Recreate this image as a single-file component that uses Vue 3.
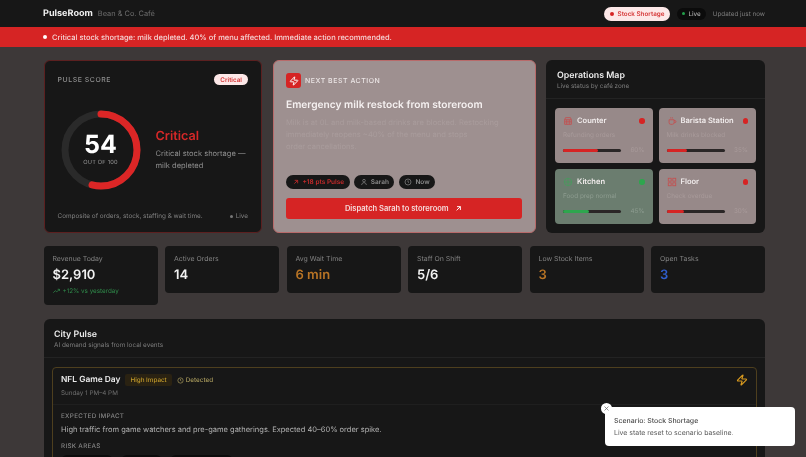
<template>
  <div class="page">
    <header class="topbar">
      <div class="brand">
        <strong>PulseRoom</strong>
        <span>Bean &amp; Co. Café</span>
      </div>
      <div class="topbar-right">
        <span class="scenario"><i></i>Stock Shortage</span>
        <span class="live"><i></i>Live</span>
        <span class="updated">Updated just now</span>
      </div>
    </header>

    <div class="banner"><i></i>Critical stock shortage: milk depleted. 40% of menu affected. Immediate action recommended.</div>

    <main class="content">
      <section class="top-grid">
        <div class="card score">
          <div class="score-head">
            <span class="eyebrow">PULSE SCORE</span>
            <span class="badge">Critical</span>
          </div>
          <div class="score-body">
            <div class="gauge">
              <svg width="80" height="80" viewBox="0 0 80 80">
                <circle cx="40" cy="40" r="36" fill="none" stroke="#2a2a2a" stroke-width="7" />
                <circle
                  cx="40"
                  cy="40"
                  r="36"
                  fill="none"
                  stroke="#dc2626"
                  stroke-width="7"
                  stroke-linecap="round"
                  stroke-dasharray="122 226"
                  transform="rotate(-90 40 40)"
                />
              </svg>
              <div class="gauge-label">
                <b>54</b>
                <small>OUT OF 100</small>
              </div>
            </div>
            <div class="score-text">
              <h2>Critical</h2>
              <p>Critical stock shortage — milk depleted</p>
            </div>
          </div>
          <div class="score-foot">
            <span>Composite of orders, stock, staffing &amp; wait time.</span>
            <span class="foot-live"><i></i>Live</span>
          </div>
        </div>

        <div class="card action">
          <div class="action-head">
            <span class="bolt-box">
              <svg width="10" height="10" viewBox="0 0 24 24" fill="none" stroke="#fff" stroke-width="2.4" stroke-linecap="round" stroke-linejoin="round">
                <path :d="zapPath" />
              </svg>
            </span>
            <span class="action-label">NEXT BEST ACTION</span>
          </div>
          <h2>Emergency milk restock from storeroom</h2>
          <p>Milk is at 0L and milk-based drinks are blocked. Restocking<br />immediately reopens ~40% of the menu and stops<br />order cancellations.</p>
          <div class="chips">
            <span class="chip red">
              <svg width="8" height="8" viewBox="0 0 24 24" fill="none" stroke="currentColor" stroke-width="2.5"><path d="M7 17L17 7M8 7h9v9" /></svg>
              +18 pts Pulse
            </span>
            <span class="chip">
              <svg width="8" height="8" viewBox="0 0 24 24" fill="none" stroke="currentColor" stroke-width="2"><circle cx="12" cy="8" r="4" /><path d="M5 21c0-4 3-7 7-7s7 3 7 7" /></svg>
              Sarah
            </span>
            <span class="chip">
              <svg width="8" height="8" viewBox="0 0 24 24" fill="none" stroke="currentColor" stroke-width="2"><circle cx="12" cy="12" r="9" /><path d="M12 7v5l3 2" /></svg>
              Now
            </span>
          </div>
          <button class="dispatch">
            Dispatch Sarah to storeroom
            <svg width="9" height="9" viewBox="0 0 24 24" fill="none" stroke="#fff" stroke-width="2.5"><path d="M7 17L17 7M8 7h9v9" /></svg>
          </button>
        </div>

        <div class="card ops">
          <div class="ops-head">
            <h3>Operations Map</h3>
            <span>Live status by café zone</span>
          </div>
          <div class="zones">
            <div v-for="z in zones" :key="z.name" class="zone" :class="{ ok: z.ok }">
              <div class="zone-top">
                <svg width="10" height="10" viewBox="0 0 24 24" fill="none" stroke="currentColor" stroke-width="2" v-html="z.icon"></svg>
                <b>{{ z.name }}</b>
                <i></i>
              </div>
              <div class="zone-note">{{ z.note }}</div>
              <div class="zone-bottom">
                <div class="track"><div class="fill" :style="{ width: z.pct + '%' }"></div></div>
                <span>{{ z.pct }}%</span>
              </div>
            </div>
          </div>
        </div>
      </section>

      <section class="kpis">
        <div v-for="k in kpis" :key="k.label" class="kpi">
          <span class="kpi-label">{{ k.label }}</span>
          <b :class="k.tone">{{ k.value }}</b>
          <span v-if="k.trend" class="kpi-trend">
            <svg width="7" height="6" viewBox="0 0 24 18" fill="none" stroke="currentColor" stroke-width="2.6"><path d="M1 15l7-7 5 4 9-9M16 3h6v6" /></svg>
            {{ k.trend }}
          </span>
        </div>
      </section>

      <section class="card city">
        <div class="city-head">
          <h3>City Pulse</h3>
          <span>AI demand signals from local events</span>
        </div>
        <div class="event">
          <div class="event-head">
            <div>
              <div class="event-title">
                <b>NFL Game Day</b>
                <span class="impact">High Impact</span>
                <span class="detected">
                  <svg width="7" height="7" viewBox="0 0 24 24" fill="none" stroke="currentColor" stroke-width="2.4"><circle cx="12" cy="12" r="9" /><path d="M12 7v5l3 2" /></svg>
                  Detected
                </span>
              </div>
              <div class="event-time">Sunday 1 PM–4 PM</div>
            </div>
            <svg width="12" height="12" viewBox="0 0 24 24" fill="none" stroke="#d99a1f" stroke-width="2.4" stroke-linecap="round" stroke-linejoin="round">
              <path :d="zapPath" />
            </svg>
          </div>
          <div class="event-body">
            <div class="event-label">EXPECTED IMPACT</div>
            <p>High traffic from game watchers and pre-game gatherings. Expected 40–60% order spike.</p>
            <div class="event-label">RISK AREAS</div>
            <div class="risks">
              <span>Milk supply</span>
              <span>Staffing</span>
              <span>Wait time spike</span>
            </div>
          </div>
        </div>
      </section>
    </main>

    <aside class="toast">
      <span class="toast-close">
        <svg width="5" height="5" viewBox="0 0 10 10" stroke="#666" stroke-width="1.4"><path d="M1 1l8 8M9 1l-8 8" /></svg>
      </span>
      <strong>Scenario: Stock Shortage</strong>
      <span>Live state reset to scenario baseline.</span>
    </aside>
  </div>
</template>

<script setup>
const zapPath =
  "M4 14a1 1 0 0 1-.78-1.63l9.9-10.2a.5.5 0 0 1 .86.46l-1.92 6.02A1 1 0 0 0 13 10h7a1 1 0 0 1 .78 1.63l-9.9 10.2a.5.5 0 0 1-.86-.46l1.92-6.02A1 1 0 0 0 11 14z";

const zones = [
  {
    name: "Counter",
    note: "Refunding orders",
    pct: 60,
    icon: '<path d="M4 9l2-5h12l2 5M4 9h16v11H4zM9 9v11M15 9v11M4 14h16" />',
  },
  {
    name: "Barista Station",
    note: "Milk drinks blocked",
    pct: 35,
    icon: '<path d="M5 9h12v7a4 4 0 0 1-4 4H9a4 4 0 0 1-4-4zM17 11h2a2 2 0 0 1 0 5h-2M9 3v3M13 3v3" />',
  },
  {
    name: "Kitchen",
    note: "Food prep normal",
    pct: 45,
    ok: true,
    icon: '<circle cx="12" cy="12" r="9" /><path d="M3 12h18M12 3v18" />',
  },
  {
    name: "Floor",
    note: "Check overdue",
    pct: 30,
    icon: '<rect x="3" y="3" width="7" height="7" /><rect x="14" y="3" width="7" height="7" /><rect x="3" y="14" width="7" height="7" /><rect x="14" y="14" width="7" height="7" />',
  },
];

const kpis = [
  { label: "Revenue Today", value: "$2,910", trend: "+12% vs yesterday" },
  { label: "Active Orders", value: "14" },
  { label: "Avg Wait Time", value: "6 min", tone: "amber" },
  { label: "Staff On Shift", value: "5/6" },
  { label: "Low Stock Items", value: "3", tone: "amber" },
  { label: "Open Tasks", value: "3", tone: "blue" },
];
</script>

<style>
html,
body {
  margin: 0;
  overflow: hidden;
  background: #3d3838;
}
</style>

<style scoped>
.page {
  position: relative;
  width: 806px;
  height: 457px;
  overflow: hidden;
  background: #3d3838;
  font-family: Inter, "Liberation Sans", sans-serif;
  color: #f2f2f2;
  text-rendering: geometricPrecision;
  filter: blur(0.3px);
}

i {
  display: block;
  border-radius: 50%;
}

h2,
h3,
p {
  margin: 0;
}

.topbar {
  display: flex;
  align-items: center;
  justify-content: space-between;
  height: 27px;
  padding: 0 41px 0 43px;
  background: #171717;
}

.brand {
  display: flex;
  align-items: baseline;
  gap: 5px;
}

.brand strong {
  font-size: 9.1px;
  font-weight: 700;
  color: #f0f0f0;
}

.brand span {
  font-size: 7.4px;
  color: #6e6e6e;
}

.topbar-right {
  display: flex;
  align-items: center;
  font-size: 6.3px;
}

.scenario {
  display: flex;
  align-items: center;
  gap: 4px;
  height: 14px;
  padding: 0 6px;
  border-radius: 7px;
  background: #fde8e8;
  color: #d63a3a;
  font-weight: 600;
}

.scenario i {
  width: 4px;
  height: 4px;
  background: #d62424;
}

.live {
  display: flex;
  align-items: center;
  gap: 3px;
  height: 12px;
  margin-left: 7px;
  padding: 0 5px;
  border-radius: 6px;
  background: #0b0b0b;
  color: #a8a8a8;
  font-weight: 500;
}

.live i {
  width: 3px;
  height: 3px;
  background: #22a04a;
}

.updated {
  margin-left: 7px;
  color: #7d7d7d;
}

.banner {
  display: flex;
  align-items: center;
  gap: 5px;
  height: 20px;
  padding-left: 43px;
  background: #d62424;
  color: #f6d6d6;
  font-size: 7.5px;
  font-weight: 500;
}

.banner i {
  width: 4px;
  height: 4px;
  background: #fff;
}

.content {
  padding: 13px 41px 0 43.5px;
}

.card {
  box-sizing: border-box;
  border-radius: 6px;
  background: #171717;
}

.top-grid {
  display: grid;
  grid-template-columns: 218.5px 263px 219px;
  gap: 10.5px;
  height: 173px;
}

.score {
  display: flex;
  flex-direction: column;
  padding: 13px 13px 12px;
  border: 1px solid #5c2020;
}

.score-head {
  display: flex;
  align-items: center;
  justify-content: space-between;
}

.eyebrow {
  font-size: 6.93px;
  font-weight: 500;
  letter-spacing: 0.55px;
  color: #8f8f8f;
}

.badge {
  padding: 1.5px 6px;
  border-radius: 6px;
  background: #fde8e8;
  color: #d63a3a;
  font-size: 6.3px;
  font-weight: 600;
}

.score-body {
  display: flex;
  align-items: center;
  gap: 15px;
  flex: 1;
  padding: 3px 0 0 3px;
}

.gauge {
  position: relative;
  flex: none;
  width: 80px;
  height: 80px;
}

.gauge svg {
  display: block;
}

.gauge-label {
  position: absolute;
  inset: 0;
  display: flex;
  flex-direction: column;
  align-items: center;
  justify-content: center;
}

.gauge-label b {
  font-size: 25px;
  font-weight: 700;
  line-height: 23px;
  color: #fff;
}

.gauge-label small {
  margin-top: 2px;
  font-size: 5.67px;
  line-height: 8px;
  letter-spacing: 0.2px;
  color: #9a9a9a;
}

.score-text h2 {
  font-size: 12.6px;
  font-weight: 600;
  line-height: 16px;
  color: #d62828;
}

.score-text p {
  margin-top: 3px;
  font-size: 7.56px;
  line-height: 12px;
  color: #8f8f8f;
}

.score-foot {
  display: flex;
  justify-content: space-between;
  font-size: 6.4px;
  color: #808080;
}

.foot-live {
  display: flex;
  align-items: center;
  gap: 3px;
}

.foot-live i {
  width: 3px;
  height: 3px;
  background: #777;
}

.action {
  display: flex;
  flex-direction: column;
  padding: 12px 13px 13px 12.5px;
  border: 1px solid #b86a6a;
  background: #9e9090;
}

.action-head {
  display: flex;
  align-items: center;
  gap: 4px;
}

.bolt-box {
  display: flex;
  align-items: center;
  justify-content: center;
  width: 15px;
  height: 15px;
  border-radius: 3px;
  background: #d62424;
}

.action-label {
  font-size: 6.93px;
  font-weight: 500;
  letter-spacing: 0.55px;
  color: #ece6e6;
}

.action h2 {
  margin-top: 10px;
  font-size: 10.2px;
  font-weight: 600;
  line-height: 14px;
  color: #f5f0f0;
}

.action p {
  margin-top: 4.5px;
  font-size: 7.6px;
  line-height: 12px;
  color: #a99c9c;
}

.chips {
  display: flex;
  gap: 4.5px;
  margin-top: auto;
}

.chip {
  display: flex;
  align-items: center;
  gap: 3px;
  height: 14px;
  padding: 0 5.5px;
  border-radius: 7px;
  background: #171717;
  color: #8c8c8c;
  font-size: 6.5px;
  font-weight: 600;
}

.chip.red {
  color: #c42a2a;
}

.dispatch {
  display: flex;
  align-items: center;
  justify-content: center;
  gap: 5px;
  height: 21px;
  margin-top: 9px;
  padding: 0;
  border: 0;
  border-radius: 3px;
  background: #d62424;
  color: #f6dada;
  font-family: inherit;
  font-size: 7.56px;
  font-weight: 600;
}

.ops-head {
  box-sizing: border-box;
  height: 39px;
  padding: 10px 11px 0;
  border-bottom: 1px solid #232323;
}

.ops-head h3 {
  font-size: 8.82px;
  font-weight: 600;
  line-height: 12px;
  color: #ececec;
}

.ops-head span {
  display: block;
  font-size: 6.3px;
  line-height: 9px;
  color: #7d7d7d;
}

.zones {
  display: grid;
  grid-template-columns: 1fr 1fr;
  gap: 6px;
  padding: 9px 9px 0;
}

.zone {
  box-sizing: border-box;
  height: 55px;
  padding: 8px 8px 0;
  border-radius: 4px;
  background: #978989;
  color: #d04040;
}

.zone.ok {
  background: #6b7d6f;
  color: #3fa35a;
}

.zone-top {
  display: flex;
  align-items: center;
  gap: 4px;
}

.zone-top svg {
  flex: none;
  opacity: 0.8;
}

.zone-top b {
  flex: 1;
  font-size: 7.56px;
  font-weight: 600;
  line-height: 10px;
  color: #f1ecec;
}

.zone-top i {
  width: 5.5px;
  height: 5.5px;
  background: #d62424;
}

.zone.ok .zone-top i {
  background: #2ea64e;
}

.zone-note {
  margin-top: 5px;
  font-size: 6.4px;
  line-height: 9px;
  color: #a89a9a;
}

.zone.ok .zone-note {
  color: #8d9c90;
}

.zone-bottom {
  display: flex;
  align-items: center;
  gap: 9px;
  margin-top: 6px;
  font-size: 6.3px;
  line-height: 9px;
  color: #a89a9a;
}

.zone-bottom span {
  min-width: 14px;
  text-align: right;
}

.zone.ok .zone-bottom {
  color: #8d9c90;
}

.track {
  flex: 1;
  height: 3px;
  border-radius: 2px;
  background: #2a2626;
}

.fill {
  height: 100%;
  border-radius: 2px;
  background: #d62424;
}

.zone.ok .fill {
  background: #2ea64e;
}

.kpis {
  display: grid;
  grid-template-columns: repeat(6, 1fr);
  gap: 7.5px;
  align-items: start;
  margin-top: 13px;
}

.kpi {
  display: flex;
  flex-direction: column;
  box-sizing: border-box;
  padding: 8px 9px 9px;
  border-radius: 4px;
  background: #171717;
}

.kpi-label {
  font-size: 6.93px;
  line-height: 10px;
  color: #828282;
}

.kpi b {
  margin-top: 3px;
  font-size: 13px;
  font-weight: 600;
  line-height: 17px;
  color: #f2f2f2;
}

.kpi b.amber {
  color: #b87425;
}

.kpi b.blue {
  color: #2f5fd0;
}

.kpi-trend {
  display: flex;
  align-items: center;
  gap: 3px;
  margin-top: 2px;
  font-size: 6.3px;
  line-height: 10px;
  color: #2f8a4a;
}

.city {
  margin-top: 14px;
  height: 200px;
}

.city-head {
  box-sizing: border-box;
  height: 39px;
  padding: 10px 10.5px 0;
  border-bottom: 1px solid #232323;
}

.city-head h3 {
  font-size: 8.82px;
  font-weight: 600;
  line-height: 12px;
  color: #ececec;
}

.city-head span {
  display: block;
  font-size: 6.4px;
  line-height: 9px;
  color: #7d7d7d;
}

.event {
  margin: 9px 8.5px 0;
  border: 1px solid #4e3f1e;
  border-radius: 4px;
}

.event-head {
  display: flex;
  align-items: flex-start;
  justify-content: space-between;
  box-sizing: border-box;
  height: 37px;
  padding: 6px 8px 0;
  border-bottom: 1px solid #1f1f1f;
}

.event-title {
  display: flex;
  align-items: center;
  gap: 5px;
}

.event-title b {
  font-size: 8.4px;
  font-weight: 600;
  color: #ececec;
}

.impact {
  padding: 2px 5px;
  border-radius: 2px;
  background: #2a2212;
  color: #c29a2a;
  font-size: 6.3px;
  font-weight: 500;
}

.detected {
  display: flex;
  align-items: center;
  gap: 2px;
  color: #a89a5c;
  font-size: 6.3px;
  font-weight: 500;
}

.event-time {
  margin-top: 3px;
  font-size: 6.3px;
  color: #6f6f6f;
}

.event-body {
  padding: 7px 8px;
}

.event-label {
  font-size: 6.3px;
  font-weight: 500;
  letter-spacing: 0.3px;
  line-height: 9px;
  color: #848484;
}

.event-body p {
  margin: 3px 0 7px;
  font-size: 7.5px;
  line-height: 11px;
  color: #b3b3b3;
}

.risks {
  display: flex;
  gap: 8px;
  margin-top: 4px;
}

.risks span {
  padding: 6px 9px 3px;
  border-radius: 6px;
  background: #0b0b0b;
  color: #8c8c8c;
  font-size: 6.3px;
  line-height: 10px;
}

.toast {
  position: absolute;
  left: 605px;
  top: 407px;
  display: flex;
  flex-direction: column;
  justify-content: center;
  gap: 3px;
  box-sizing: border-box;
  width: 190px;
  height: 39px;
  padding: 0 9px;
  border-radius: 4px;
  background: #fff;
  font-size: 6.93px;
  color: #5a5a5a;
}

.toast strong {
  font-weight: 500;
  color: #4a4a4a;
}

.toast-close {
  position: absolute;
  left: -4px;
  top: -4px;
  display: flex;
  align-items: center;
  justify-content: center;
  width: 11px;
  height: 11px;
  border-radius: 50%;
  background: #fff;
}
</style>
